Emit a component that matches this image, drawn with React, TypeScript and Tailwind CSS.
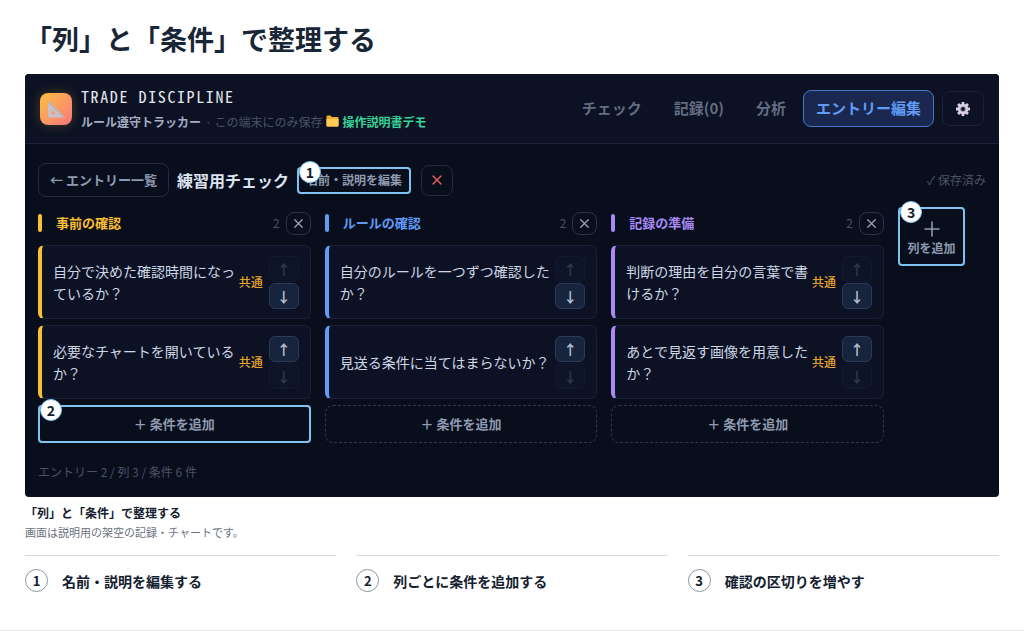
import React from 'react';
import { clsx } from 'clsx';
import { X } from 'lucide-react';

type Rule = { text: string; shared: boolean };
type Column = { title: string; bar: string; edge: string; label: string; rules: Rule[] };

const columns: Column[] = [
  {
    title: '事前の確認',
    bar: 'bg-[#fbbf34]',
    edge: 'border-l-[#fbbf34]',
    label: 'text-[#fbbf34]',
    rules: [
      { text: '自分で決めた確認時間になっているか？', shared: true },
      { text: '必要なチャートを開いているか？', shared: true },
    ],
  },
  {
    title: 'ルールの確認',
    bar: 'bg-[#619bf5]',
    edge: 'border-l-[#619bf5]',
    label: 'text-[#619bf5]',
    rules: [
      { text: '自分のルールを一つずつ確認したか？', shared: false },
      { text: '見送る条件に当てはまらないか？', shared: false },
    ],
  },
  {
    title: '記録の準備',
    bar: 'bg-[#a88af5]',
    edge: 'border-l-[#a88af5]',
    label: 'text-[#a88af5]',
    rules: [
      { text: '判断の理由を自分の言葉で書けるか？', shared: true },
      { text: 'あとで見返す画像を用意したか？', shared: true },
    ],
  },
];

const tabs = ['チェック', '記録(0)', '分析', 'エントリー編集'];
const steps = ['名前・説明を編集する', '列ごとに条件を追加する', '確認の区切りを増やす'];

const Badge: React.FC<{ n: number }> = ({ n }) => (
  <span className="absolute -top-1.5 left-0.5 flex h-[22px] w-[22px] items-center justify-center rounded-full border border-[#7fc4f0] bg-white text-[14px] leading-none font-bold text-[#14202e]">
    {n}
  </span>
);

const Logo: React.FC = () => (
  <div className="flex h-8 w-8 items-center justify-center rounded-lg bg-gradient-to-br from-[#fbbf34] to-[#f9757a] shadow-[0_0_12px_rgba(251,191,52,0.25)]">
    <svg viewBox="0 0 20 20" className="h-5 w-5" aria-hidden="true">
      <path d="M2 1.500 19 18.500H2Z M5.500 10.500V15H10Z" fill="#c4bfca" fillRule="evenodd" />
      <path d="M3.500 4 17 17.500" stroke="#8d8799" strokeWidth="1" strokeDasharray="1 1.300" fill="none" />
    </svg>
  </div>
);

const FolderIcon: React.FC = () => (
  <svg viewBox="0 0 13 12" className="h-3 w-[13px]" aria-hidden="true">
    <path d="M.5 1.500Q.5.500 1.500.500H4.500L6 2H11.500Q12.500 2 12.500 3V10.500Q12.500 11.500 11.500 11.500H1.500Q.5 11.500.5 10.500Z" fill="#f0ac2c" />
    <path d="M.5 4H12.500V10.500Q12.500 11.500 11.500 11.500H1.500Q.5 11.500.5 10.500Z" fill="#ffca55" />
  </svg>
);

const GearIcon: React.FC = () => (
  <svg viewBox="0 0 16 16" className="h-4 w-4" aria-hidden="true">
    <g stroke="#d9cfe3" strokeWidth="2.800">
      <path d="M8 1V15M1 8H15M3.050 3.050 12.950 12.950M12.950 3.050 3.050 12.950" />
    </g>
    <circle cx="8" cy="8" r="5.200" fill="#d9cfe3" />
    <circle cx="8" cy="8" r="2.600" fill="#6c6480" />
    <circle cx="8" cy="8" r="1.700" fill="#0c1224" />
  </svg>
);

const MoveButton: React.FC<{ dir: '↑' | '↓'; disabled: boolean }> = ({ dir, disabled }) => (
  <button
    type="button"
    disabled={disabled}
    aria-label={dir === '↑' ? '上へ' : '下へ'}
    className={clsx(
      'flex h-[26px] w-[30px] items-center justify-center rounded-md border text-[14px] leading-none font-bold',
      disabled ? 'border-[#141a2d] bg-[#0e1427] text-[#30384b]' : 'border-[#2b3a55] bg-[#18243e] text-[#b4bfd0]'
    )}
  >
    {dir}
  </button>
);

const App: React.FC = () => {
  return (
    <div className="border-b border-[#e5e7eb] bg-white px-[25px] pt-[19px] pb-[38px] font-['Noto_Sans_CJK_JP',sans-serif] text-[#14202e]">
      <h1 className="text-[27px] leading-10 font-bold text-[#182635]">「列」と「条件」で整理する</h1>

      <main className="mt-[15px] overflow-hidden rounded bg-[#090e1d]">
        <header className="flex items-center justify-between border-b border-[#1b2338] bg-[#0c1224] px-[15px]">
          <div className="flex h-[69px] items-center gap-[9px]">
            <Logo />
            <div>
              <div className="font-['Noto_Sans_Mono_CJK_JP','Liberation_Mono',monospace] text-[16px] leading-[25px] tracking-widest text-[#e2e8f0]">
                TRADE DISCIPLINE
              </div>
              <div className="flex items-center text-[12px] leading-[25px]">
                <span className="font-bold text-[#a3aec2]">ルール遵守トラッカー</span>
                <span className="ml-1 text-[#4a5266]">· この端末にのみ保存</span>
                <span className="ml-1 flex items-center gap-[3px] font-bold text-[#36d399]">
                  <FolderIcon />
                  操作説明書デモ
                </span>
              </div>
            </div>
          </div>
          <nav className="flex items-center gap-0.5">
            {tabs.map((tab, i) => (
              <button
                key={tab}
                type="button"
                className={clsx(
                  'h-[37px] rounded-lg border text-[15px] font-bold',
                  i === 3
                    ? 'border-[#4478c8] bg-[#1a2850] px-3 text-[#619bf5]'
                    : 'border-transparent px-[14px] text-[#626c82]'
                )}
              >
                {tab}
              </button>
            ))}
            <button
              type="button"
              aria-label="設定"
              className="ml-1.5 flex h-[35px] w-[42px] items-center justify-center rounded-lg border border-[#1b2236]"
            >
              <GearIcon />
            </button>
          </nav>
        </header>

        <div className="px-[13px] pt-[19px] pb-[14px]">
          <div className="flex items-center">
            <button
              type="button"
              className="h-[34px] rounded-lg border border-[#232b3f] px-[11px] text-[13px] font-bold text-[#8f9bb0]"
            >
              ← エントリー一覧
            </button>
            <h2 className="ml-2 text-[16px] font-bold text-[#dbe3f0]">練習用チェック</h2>
            <div className="relative ml-2">
              <button
                type="button"
                className="block h-[27px] rounded-sm border-2 border-[#7fc4f0] px-[7px] text-[12px] font-bold text-[#8f9bb0]"
              >
                名前・説明を編集
              </button>
              <Badge n={1} />
            </div>
            <button
              type="button"
              aria-label="削除"
              className="ml-[10px] flex h-[31px] w-8 items-center justify-center rounded-lg border border-[#232b3f] text-[#e5605f]"
            >
              <X size={16} strokeWidth={2} />
            </button>
            <span className="ml-auto text-[12px] text-[#4a5266]">✓ 保存済み</span>
          </div>

          <div className="mt-[10px] flex items-start gap-[14px] pr-[21px]">
            {columns.map((col, c) => (
              <section key={col.title} className="min-w-0 flex-1">
                <div className="flex h-8 items-center">
                  <span className={clsx('h-[18px] w-1 rounded-xs', col.bar)}></span>
                  <h3 className={clsx('ml-[14px] text-[13px] font-bold', col.label)}>{col.title}</h3>
                  <span className="ml-auto text-[12px] text-[#4a5266]">{col.rules.length}</span>
                  <button
                    type="button"
                    aria-label={`${col.title}を削除`}
                    className="ml-1.5 flex h-[23px] w-[25px] items-center justify-center rounded-lg border border-[#2a3246] text-[#9aa5b8]"
                  >
                    <X size={15} strokeWidth={2} />
                  </button>
                </div>
                <div className="mt-1.5 flex flex-col gap-1.5">
                  {col.rules.map((rule, i) => (
                    <div
                      key={rule.text}
                      className={clsx(
                        'flex h-[74px] items-center rounded-md border border-l-4 border-y-[#1a2135] border-r-[#1a2135] bg-[#0c1224] px-[11px]',
                        col.edge
                      )}
                    >
                      <p className="flex-1 text-[14px] leading-[22px] text-[#cfd7e6]">{rule.text}</p>
                      {rule.shared && (
                        <span className="mr-1.5 ml-0.5 shrink-0 text-[12px] font-medium text-[#e8a42b]">共通</span>
                      )}
                      <div className="flex flex-col gap-px">
                        <MoveButton dir="↑" disabled={i === 0} />
                        <MoveButton dir="↓" disabled={i === col.rules.length - 1} />
                      </div>
                    </div>
                  ))}
                  <div className="relative">
                    <button
                      type="button"
                      className={clsx(
                        'block h-[38px] w-full text-[13px] font-bold text-[#8f9bb0]',
                        c === 0 ? 'rounded-sm border-2 border-[#7fc4f0]' : 'rounded-lg border border-dashed border-[#2f374a]'
                      )}
                    >
                      ＋ 条件を追加
                    </button>
                    {c === 0 && <Badge n={2} />}
                  </div>
                </div>
              </section>
            ))}
            <div className="relative">
              <button
                type="button"
                className="flex h-[59px] w-[67px] flex-col items-center justify-center rounded-sm border-2 border-[#7fc4f0] pt-1 text-[#8f9bb0]"
              >
                <svg viewBox="0 0 16 16" className="h-4 w-4" aria-hidden="true">
                  <path d="M8 .5V15.500M.5 8H15.500" stroke="currentColor" strokeWidth="1.600" />
                </svg>
                <span className="mt-0.5 text-[12px] leading-[18px] font-bold">列を追加</span>
              </button>
              <Badge n={3} />
            </div>
          </div>

          <p className="mt-[18px] text-[12px] leading-[22px] text-[#4a5266]">エントリー 2 / 列 3 / 条件 6 件</p>
        </div>
      </main>

      <p className="mt-1.5 text-[12px] leading-5 font-bold">「列」と「条件」で整理する</p>
      <p className="text-[11px] leading-[18px] text-[#6b7280]">画面は説明用の架空の記録・チャートです。</p>

      <ol className="mt-[14px] grid grid-cols-3 gap-5">
        {steps.map((step, i) => (
          <li key={step} className="flex items-center gap-[14px] border-t border-[#d3d8dc] pt-[13px]">
            <span className="flex h-[23px] w-[23px] items-center justify-center rounded-full border border-[#8a95a1] text-[13px] leading-none font-bold">
              {i + 1}
            </span>
            <span className="text-[14px] leading-5 font-bold">{step}</span>
          </li>
        ))}
      </ol>
    </div>
  );
};

export default App;
